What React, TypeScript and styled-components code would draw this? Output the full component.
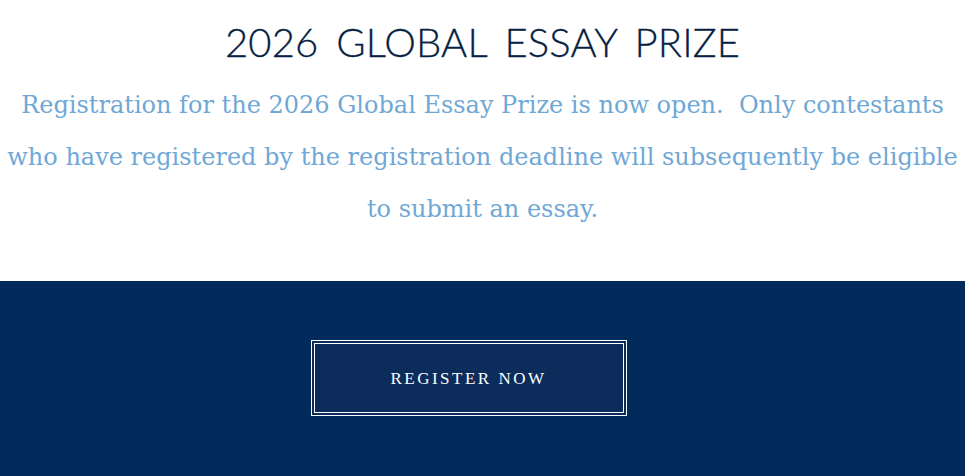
import React from "react";
import styled, { createGlobalStyle } from "styled-components";

const Global = createGlobalStyle`
  html, body { margin: 0; padding: 0; background: #ffffff; }
  body { overflow: hidden; }
`;

const Page = styled.div`
  width: 965px;
  height: 476px;
  display: flex;
  flex-direction: column;
`;

const Intro = styled.section`
  height: 281px;
  display: flex;
  flex-direction: column;
  align-items: center;
  padding-top: 20px;
  box-sizing: border-box;
`;

const Title = styled.h1`
  margin: 0;
  font-family: "Lato", "Open Sans", sans-serif;
  font-weight: 300;
  font-size: 40px;
  line-height: 44px;
  letter-spacing: 0.1px;
  word-spacing: 7px;
  color: #071f44;
  -webkit-text-stroke: 0.3px #071f44;
`;

const Lead = styled.p`
  margin: 15px 0 0;
  font-family: "DejaVu Serif", "Liberation Serif", serif;
  font-size: 24px;
  line-height: 52px;
  color: #6fa8d6;
  text-align: center;
  white-space: pre-line;
`;

const Band = styled.section`
  flex: 1;
  background: #022a5a;
  display: flex;
  justify-content: center;
  padding-top: 59px;
`;

const Button = styled.a`
  box-sizing: border-box;
  width: 316px;
  height: 76px;
  margin-right: 28px;
  border: 4px double #ffffff;
  background: #0c2d5c;
  display: flex;
  align-items: center;
  justify-content: center;
  padding-top: 2px;
  font-family: "Liberation Serif", "DejaVu Serif", serif;
  font-size: 17px;
  letter-spacing: 2.5px;
  color: #ffffff;
  text-decoration: none;
  cursor: pointer;
`;

export default function App() {
  return (
    <Page>
      <Global />
      <Intro>
        <Title>2026 GLOBAL ESSAY PRIZE</Title>
        <Lead>
          {"Registration for the 2026 Global Essay Prize is now open.\u00a0 Only contestants\nwho have registered by the registration deadline will subsequently be eligible\nto submit an essay."}
        </Lead>
      </Intro>
      <Band>
        <Button href="#">REGISTER NOW</Button>
      </Band>
    </Page>
  );
}
